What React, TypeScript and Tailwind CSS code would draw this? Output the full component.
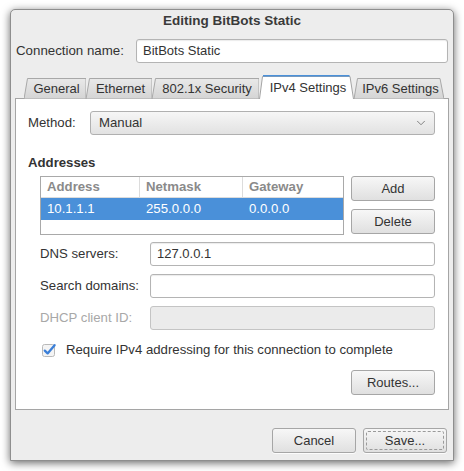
import { ChevronDown } from "lucide-react";
import { ReactNode } from "react";

const font = { fontFamily: '"Liberation Sans", Arial, sans-serif' };

function Field({ value, disabled, width }: { value?: string; disabled?: boolean; width: string }) {
  return (
    <div
      className={`${width} h-[24px] rounded-[3px] border px-[6px] flex items-center text-[13px] ${
        disabled
          ? "bg-[#ebebeb] border-[#c4c4c4]"
          : "bg-white border-[#b4b4b4] shadow-[inset_0_1px_1px_rgba(0,0,0,0.08)]"
      }`}
    >
      {value}
    </div>
  );
}

function Button({ children, focused, width = "w-[84px]" }: { children: ReactNode; focused?: boolean; width?: string }) {
  return (
    <div
      className={`${width} h-[25px] rounded-[3px] border border-[#a6a6a6] bg-gradient-to-b from-[#f7f7f7] to-[#e0e0e0] shadow-[0_1px_0_rgba(255,255,255,0.8)] p-[2px] text-[13px]`}
    >
      <div
        className={`h-full flex items-center justify-center ${
          focused ? "border border-dashed border-[#9a9a9a] rounded-[2px]" : ""
        }`}
      >
        {children}
      </div>
    </div>
  );
}

function Tab({ label, width, active, last }: { label: string; width: number; active?: boolean; last?: boolean }) {
  const h = active ? 24 : 21;
  const right = active || last ? width - 4 : width;
  const pts = `0,${h} 3.5,0.5 ${right},0.5 ${width},${h}`;
  return (
    <div
      className={`relative flex items-center justify-center text-[13px] pt-[1px] ${active ? "z-10" : ""}`}
      style={{ width, height: h }}
    >
      <svg className="absolute inset-0" width={width} height={h} viewBox={`0 0 ${width} ${h}`}>
        <defs>
          <linearGradient id="tabg" x1="0" y1="0" x2="0" y2="1">
            <stop offset="0" stopColor="#e9e9e9" />
            <stop offset="1" stopColor="#d4d4d4" />
          </linearGradient>
        </defs>
        {active ? (
          <>
            <polygon points={`0,${h + 1} 3.5,1 ${right},1 ${width},${h + 1}`} fill="#fff" />
            <polyline points={`0.5,${h} 3.5,1.5 ${right},1.5 ${width - 0.5},${h}`} fill="none" stroke="#a3a3a3" />
            <line x1="4" y1="0.8" x2={right - 0.5} y2="0.8" stroke="#4a90d9" strokeWidth="1.6" />
          </>
        ) : (
          <polygon points={pts} fill="url(#tabg)" stroke="#a8a8a8" />
        )}
      </svg>
      <span className="relative pl-[3px]">{label}</span>
    </div>
  );
}

function Checkbox() {
  return (
    <svg width="15" height="14" viewBox="0 0 15 14">
      <rect x="0.5" y="1.5" width="12" height="12" rx="2" fill="#f4f4f4" stroke="#b9b9b9" />
      <path d="M2.8 7.6 L5.6 10.4 L12.6 2.2" fill="none" stroke="#3b7fd8" strokeWidth="2.3" strokeLinecap="round" strokeLinejoin="round" />
    </svg>
  );
}

export default function App() {
  return (
    <div className="w-[464px] h-[471px] bg-white overflow-hidden text-[#333]" style={font}>
      <div className="ml-[10px] mt-[9px] w-[444px] h-[452px] bg-[#ededed] rounded-t-[5px] border border-[#8e8e8e] shadow-[0_2px_9px_rgba(0,0,0,0.6)] flex flex-col">
        <div className="h-[22px] pt-[1px] flex items-center justify-center text-[13.5px] font-bold text-[#3a3a3a]">
          Editing BitBots Static
        </div>

        <div className="mt-[7px] px-[5px] flex items-center">
          <div className="w-[120px] text-[13.3px]">Connection name:</div>
          <Field value="BitBots Static" width="w-[312px]" />
        </div>

        <div className="mt-[12px] px-[4px]">
          <div className="flex items-end pl-[9px] -mb-px relative z-10">
            <Tab label="General" width={62} />
            <Tab label="Ethernet" width={66} />
            <Tab label="802.1x Security" width={107} />
            <Tab label="IPv4 Settings" width={95} active />
            <Tab label="IPv6 Settings" width={90} last />
          </div>

          <div className="h-[312px] bg-white border border-[#a5a5a5] pl-[12px] pr-[13px] pt-[12px] text-[13.2px]">
            <div className="flex items-center">
              <div className="w-[62px]">Method:</div>
              <div className="w-[345px] h-[24px] rounded-[3px] border border-[#b0b0b0] bg-gradient-to-b from-[#f6f6f6] to-[#e2e2e2] flex items-center justify-between pl-[8px] pr-[6px]">
                <span>Manual</span>
                <ChevronDown size={14} strokeWidth={1.6} color="#7a7a7a" />
              </div>
            </div>

            <div className="mt-[20px] leading-[16px] font-bold">Addresses</div>

            <div className="mt-[5px] pl-[12px] flex gap-[7px]">
              <div className="w-[304px] h-[59px] border border-[#a9a9a9] bg-white">
                <div className="h-[21px] grid grid-cols-[99px_103px_1fr] text-[#8a8a8a] font-bold border-b border-[#dcdcdc]">
                  <div className="pl-[6px] flex items-center border-r border-[#dcdcdc]">Address</div>
                  <div className="pl-[6px] flex items-center border-r border-[#dcdcdc]">Netmask</div>
                  <div className="pl-[6px] flex items-center">Gateway</div>
                </div>
                <div className="h-[22px] grid grid-cols-[99px_103px_1fr] bg-[#4a90d9] text-white">
                  <div className="pl-[6px] flex items-center">10.1.1.1</div>
                  <div className="pl-[6px] flex items-center">255.0.0.0</div>
                  <div className="pl-[6px] flex items-center">0.0.0.0</div>
                </div>
              </div>
              <div className="flex flex-col gap-[8px]">
                <Button>Add</Button>
                <Button>Delete</Button>
              </div>
            </div>

            <div className="mt-[7px] pl-[12px] flex flex-col gap-[8px]">
              <div className="flex items-center">
                <div className="w-[110px]">DNS servers:</div>
                <Field value="127.0.0.1" width="w-[285px]" />
              </div>
              <div className="flex items-center">
                <div className="w-[110px]">Search domains:</div>
                <Field width="w-[285px]" />
              </div>
              <div className="flex items-center">
                <div className="w-[110px] text-[#a8a8a8]">DHCP client ID:</div>
                <Field width="w-[285px]" disabled />
              </div>
            </div>

            <div className="mt-[11px] pl-[14px] h-[18px] flex items-center gap-[9px]">
              <Checkbox />
              <span>Require IPv4 addressing for this connection to complete</span>
            </div>

            <div className="mt-[11px] flex justify-end">
              <Button>Routes...</Button>
            </div>
          </div>
        </div>

        <div className="mt-[18px] pr-[6px] flex justify-end gap-[7px]">
          <Button>Cancel</Button>
          <Button focused>Save...</Button>
        </div>
      </div>
    </div>
  );
}
